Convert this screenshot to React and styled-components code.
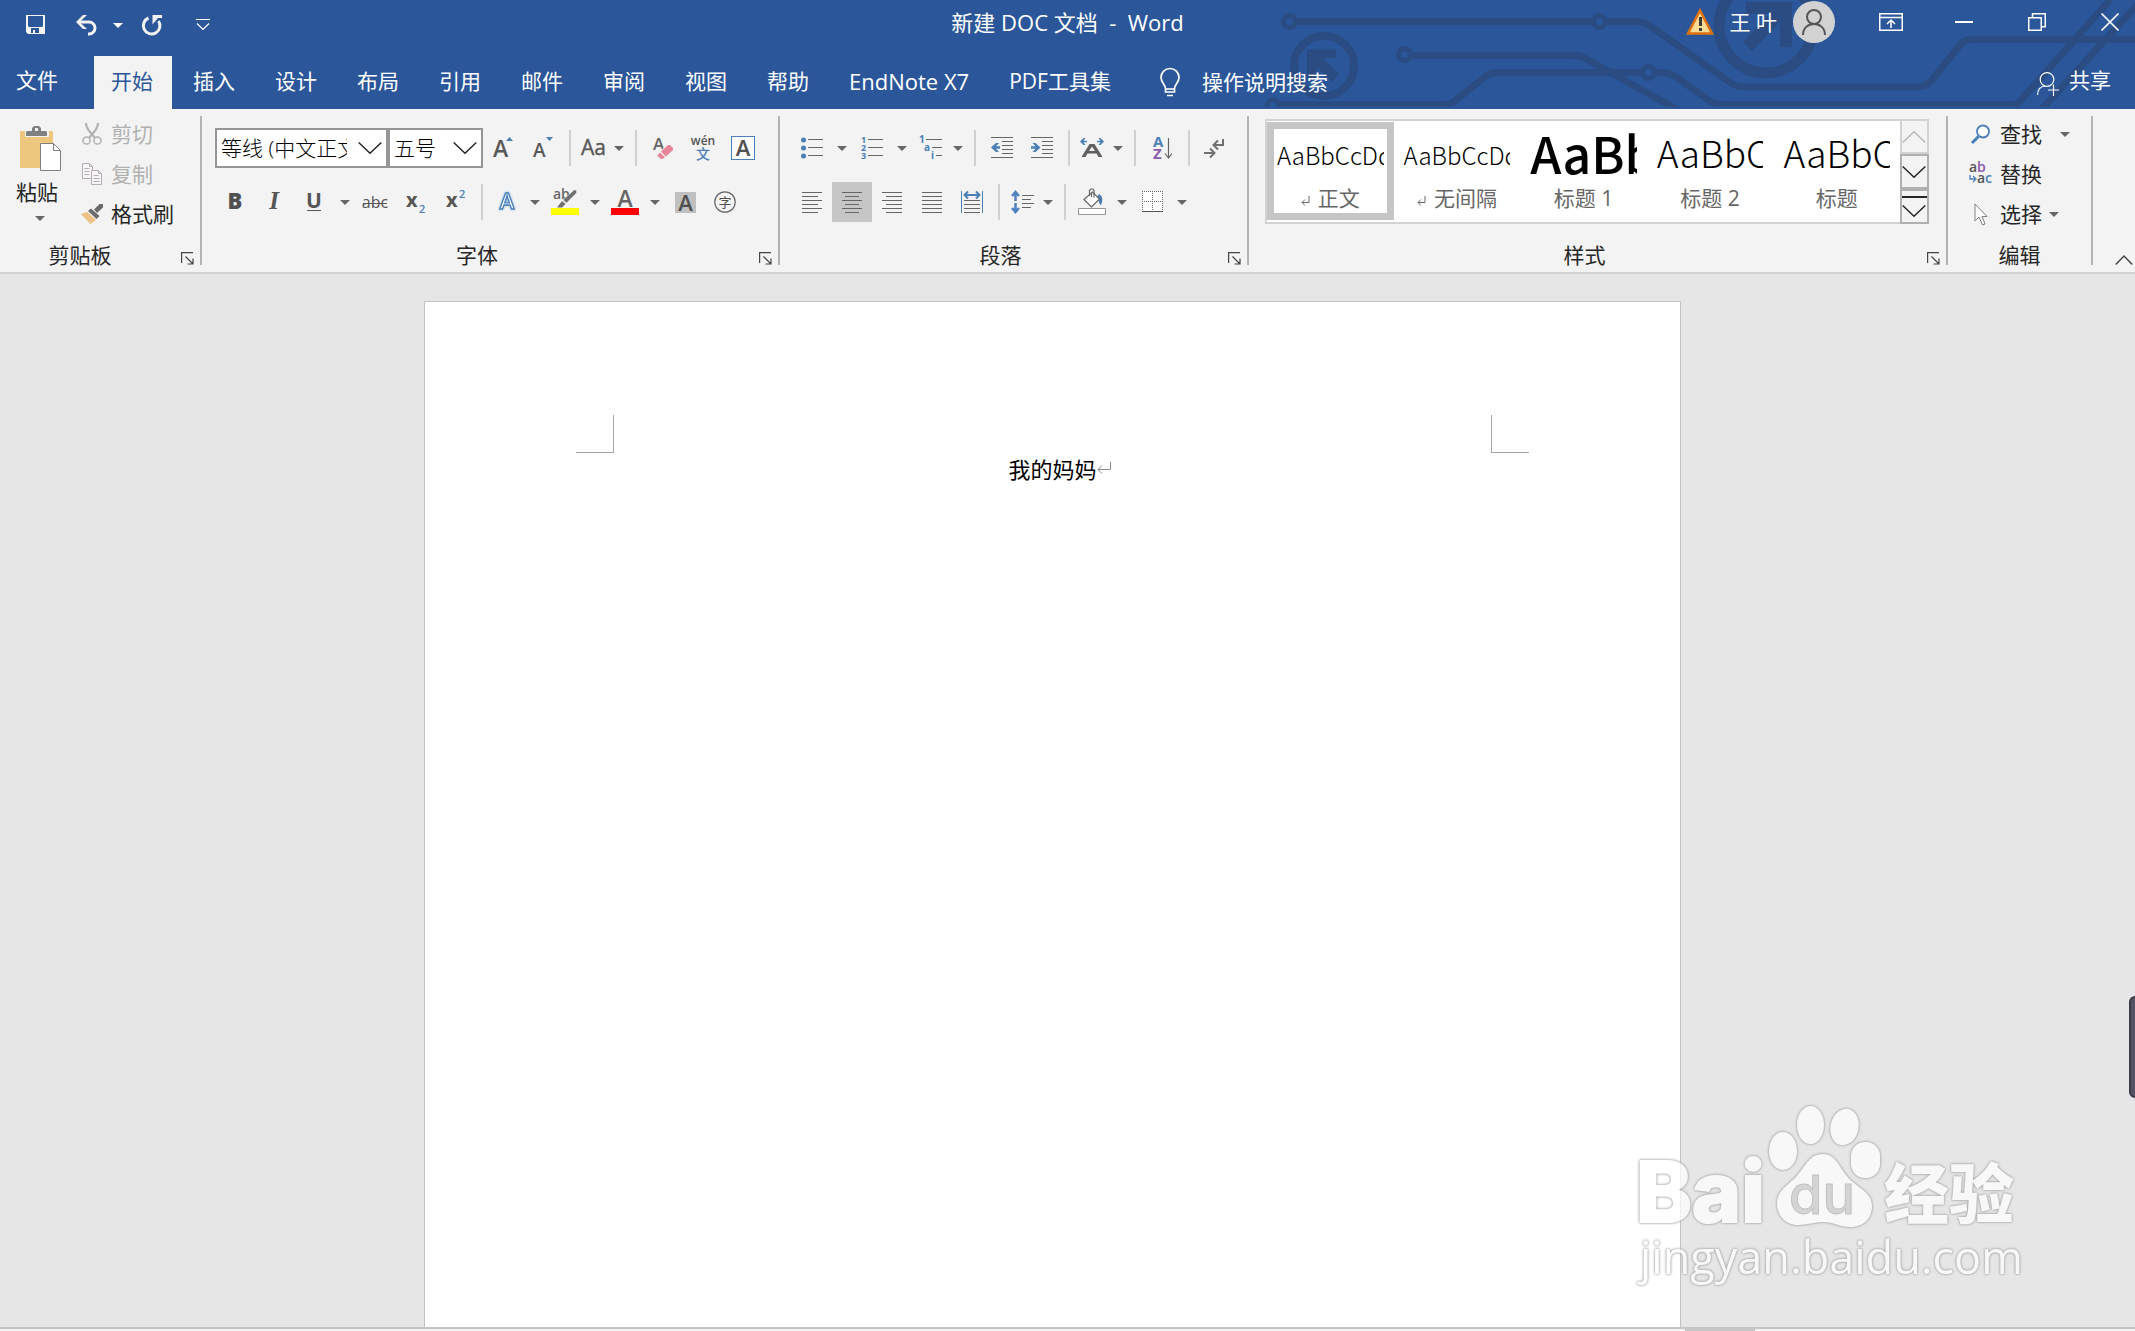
import styled, { createGlobalStyle, css } from 'styled-components';
import { useState } from 'react';

const GlobalStyle = createGlobalStyle`
  * {
    box-sizing: border-box;
  }

  body {
    margin: 0;
    font-family: 'Open Sans', 'Noto Sans CJK SC', sans-serif;
    font-size: 21px;
    line-height: 28px;
    color: #262626;
  }

  button, input, select {
    font: inherit;
    color: inherit;
    border: 0;
    padding: 0;
    background: none;
    outline: 0;
  }

  svg {
    display: block;
    flex: none;
    overflow: visible;
  }
`;

const Window = styled.div`
  min-height: 100vh;
  display: flex;
  flex-direction: column;
  position: relative;
  overflow: hidden;
  background: #e6e6e6;
`;

const Header = styled.header`
  position: relative;
  background: #2b579a;
  color: #fff;
`;

const Circuit = styled.svg`
  position: absolute;
  top: 0;
  right: 0;
  overflow: hidden;
  pointer-events: none;
`;

const TitleBar = styled.div`
  position: relative;
  height: 44px;
  display: grid;
  grid-template-columns: 1fr auto 1fr;
  align-items: center;
`;

const QuickAccess = styled.div`
  display: flex;
  align-items: center;
  gap: 10px;
  padding: 6px 0 0 16px;
`;

const SplitButton = styled.div`
  display: flex;
`;

const QuickButton = styled.button`
  width: ${({ $w }) => $w}px;
  height: 32px;
  display: flex;
  align-items: center;
  justify-content: center;
`;

const Title = styled.h1`
  margin: 0;
  font-size: 22px;
  font-weight: 400;
  white-space: pre;
`;

const WindowControls = styled.div`
  display: flex;
  align-items: center;
  justify-content: flex-end;
  gap: 23px;
  height: 44px;
`;

const Account = styled.div`
  display: flex;
  align-items: center;
  gap: 16px;
  padding-right: 8px;
  white-space: nowrap;
`;

const WindowButton = styled.button`
  width: 50px;
  height: 44px;
  display: flex;
  align-items: center;
  justify-content: center;
`;

const TabBar = styled.nav`
  position: relative;
  display: flex;
  align-items: stretch;
  height: 53px;
  margin-top: 12px;
  white-space: nowrap;
`;

const Tab = styled.button`
  padding: 0 19px 4px 17px;
  margin-right: 4px;

  ${({ $file }) =>
    $file &&
    css`
      margin-right: 17px;
      padding: 0 19px 6px 16px;
    `}

  ${({ $latin }) =>
    $latin &&
    css`
      font-size: 22px;
    `}

  ${({ $active }) =>
    $active &&
    css`
      background: #f3f3f3;
      color: #2b579a;
    `}
`;

const TellMe = styled.label`
  display: flex;
  align-items: center;
  gap: 22px;
  padding-left: 26px;

  input {
    width: 200px;
    padding-bottom: 2px;

    &::placeholder {
      color: #fff;
      opacity: 1;
    }
  }
`;

const Share = styled.button`
  display: flex;
  align-items: center;
  gap: 10px;
  margin-left: auto;
  padding: 0 24px 6px 0;

  svg {
    margin-top: 8px;
  }
`;

const RibbonBar = styled.section`
  display: flex;
  padding: 7px 0;
  background: #f3f3f3;
  border-bottom: 2px solid #d2d2d2;
`;

const Group = styled.div`
  width: ${({ $w }) => ($w ? `${$w}px` : 'auto')};
  flex: ${({ $w }) => ($w ? 'none' : '1 1 0')};
  min-width: 0;
  height: 149px;
  display: flex;
  flex-direction: column;
  justify-content: space-between;
  border-right: 2px solid #b3b3b3;
`;

const GroupFooter = styled.div`
  height: 20px;
  display: flex;
  align-items: center;

  span {
    flex: 1;
    padding-right: ${({ $pad }) => $pad || 0}px;
    text-align: center;
  }
`;

const Launcher = styled.button`
  width: 26px;
  display: flex;
  justify-content: center;
  padding-top: 6px;
`;

const ClipboardBody = styled.div`
  display: flex;
  gap: 18px;
  padding-left: 16px;
`;

const PasteButton = styled.button`
  display: flex;
  flex-direction: column;
  align-items: flex-start;
  padding-top: 10px;
  gap: 6px;

  span + svg {
    margin: 4px 0 0 19px;
  }
`;

const CommandList = styled.div`
  display: flex;
  flex-direction: column;
`;

const Command = styled.button`
  height: 40px;
  display: flex;
  align-items: center;
  gap: 7px;
  padding-bottom: 4px;
  text-align: left;
  white-space: nowrap;

  &:disabled {
    color: #b1b1b1;
  }

  > span:first-child {
    width: 24px;
    display: flex;
    justify-content: center;
  }
`;

const ToolRows = styled.div`
  display: flex;
  flex-direction: column;
  gap: 14px;
  padding: 12px 0 0 ${({ $left }) => $left}px;
`;

const ToolRow = styled.div`
  display: flex;
  align-items: center;
  height: 40px;
`;

const Tool = styled.button`
  width: ${({ $w }) => $w || 40}px;
  height: 40px;
  display: flex;
  align-items: center;
  justify-content: center;
  flex: none;
  background: ${({ $active }) => ($active ? '#c6c6c6' : 'none')};
`;

const Divider = styled.span`
  width: 2px;
  height: 36px;
  margin: 0 6px;
  flex: none;
  background: #d0d0d0;
`;

const Combo = styled.label`
  position: relative;
  width: ${({ $w }) => $w}px;

  select {
    appearance: none;
    width: 100%;
    height: 40px;
    display: block;
    padding: 0 39px 0 4px;
    border: 2px solid #969696;
    border-radius: 0;
    background: #fff;
    font-weight: 300;
    color: #000;
    text-overflow: clip;
  }

  svg {
    position: absolute;
    right: 6px;
    top: 14px;
    pointer-events: none;
  }
`;

const Gallery = styled.div`
  display: flex;
  height: 105px;
  margin: 3px 17px 0 16px;
  border: 2px solid #d2d2d2;
  border-right: 0;
  background: #fff;
`;

const StyleCard = styled.button`
  flex: 1 1 0;
  min-width: 0;
  height: 98px;
  margin-top: 1px;
  padding: 0 3px;
  border: 7px solid ${({ $active }) => ($active ? '#c5c5c5' : 'transparent')};
  display: flex;
  flex-direction: column;
`;

const Preview = styled.span`
  display: block;
  width: 100%;
  height: 55px;
  overflow: hidden;
  text-align: left;
  font-family: 'Noto Sans CJK SC', sans-serif;
  font-size: ${({ $size }) => $size}px;
  font-weight: ${({ $bold }) => ($bold ? 500 : 300)};
  line-height: ${({ $size }) => ($size > 30 ? 46 : 52)}px;
  color: #000;
`;

const StyleName = styled.span`
  width: 100%;
  display: flex;
  align-items: center;
  justify-content: center;
  gap: 8px;
  color: #666;
  white-space: nowrap;

  svg {
    margin-top: 5px;
  }
`;

const GalleryScroll = styled.div`
  width: 29px;
  margin: -2px 0;
  display: flex;
  flex-direction: column;
`;

const ScrollButton = styled.button`
  flex: 1;
  display: flex;
  flex-direction: column;
  align-items: center;
  justify-content: center;
  gap: 7px;
  border: 2px solid ${({ disabled }) => (disabled ? '#d2d2d2' : '#b0b0b0')};
  background: #f3f3f3;
  color: ${({ disabled }) => (disabled ? '#b8b8b8' : '#262626')};
`;

const EditBody = styled.div`
  padding-left: 21px;
`;

const CollapseButton = styled.button`
  flex: none;
  width: 42px;
  display: flex;
  align-items: flex-end;
  justify-content: flex-end;
  padding-right: 2px;
`;

const Workspace = styled.main`
  flex: 1;
  display: flex;
  justify-content: center;
  padding: 27px 30px 0 0;
`;

const Page = styled.article`
  width: 1257px;
  padding: 113px 151px 0;
  background: #fff;
  border: 1px solid #c3c3c3;
  border-bottom: 0;
`;

const Margins = styled.div`
  display: flex;
  justify-content: space-between;
`;

const Corner = styled.span`
  width: 38px;
  height: 38px;
  border-bottom: 1px solid #a6a6a6;
  border-${({ $side }) => $side}: 1px solid #a6a6a6;
`;

const Paragraph = styled.p`
  margin: 0;
  text-align: center;
  font-family: 'Noto Sans CJK SC', sans-serif;
  font-size: 22px;
  font-weight: 400;
  line-height: 30px;
  color: #000;

  span {
    position: relative;
  }

  svg {
    position: absolute;
    left: 100%;
    top: 10px;
  }
`;

const ScrollTrack = styled.div`
  height: 4px;
  display: flex;
  justify-content: flex-end;
  padding-right: 380px;
  background: #f3f3f3;
  border-top: 2px solid #c6c6c6;
`;

const ScrollThumb = styled.span`
  width: 70px;
  background: #c6c6c6;
`;

const SideHandle = styled.span`
  position: absolute;
  right: -6px;
  bottom: 233px;
  width: 12px;
  height: 102px;
  border: 2px solid #3c3c48;
  border-radius: 6px;
  background: #525464;
`;

const Watermark = styled.svg`
  position: absolute;
  right: 103px;
  bottom: 30px;
  opacity: 0.75;
  pointer-events: none;

  g {
    fill: #fff;
    filter: drop-shadow(0 0 1px #8c8c8c) drop-shadow(0 0 1px #b0b0b0);
  }
`;

const Caret = ({ color = '#666' }) => (
  <svg width="10" height="5" viewBox="0 0 10 5">
    <path d="M0 0h10L5 5z" fill={color} />
  </svg>
);

const Chevron = ({ up }) => (
  <svg width="24" height="12" viewBox="0 0 24 12">
    <path
      d={up ? 'M0.7 11.5 12 0.8 23.3 11.5' : 'M0.7 0.5 12 11.2 23.3 0.5'}
      fill="none"
      stroke="currentColor"
      strokeWidth="1.5"
    />
  </svg>
);

const SANS = "'Open Sans', sans-serif";
const GRAY = '#666';
const BLUE = '#4a7fb8';

const icons = {
  save: (
    <svg width="20" height="20" viewBox="0 0 20 20">
      <path
        fillRule="evenodd"
        fill="#f3f3f3"
        d="M0 0h19v19H2l-2-2zM2 1v10l1 1h13l1-1V1zM5 13v5h2v-3h2v3h4v-5z"
      />
    </svg>
  ),
  undo: (
    <svg width="22" height="21" viewBox="0 0 22 21">
      <path d="M3 7h10a6 6 0 0 1 0 12h-1" fill="none" stroke="#f3f3f3" strokeWidth="3" />
      <path d="M11 0 3.5 7l7.500 7H7L0 7l7-7z" fill="#f3f3f3" />
    </svg>
  ),
  redo: (
    <svg width="20" height="21" viewBox="0 0 20 21">
      <path d="M6.500 3A8.300 8.300 0 1 0 16.500 6" fill="none" stroke="#f3f3f3" strokeWidth="3" />
      <path d="M10.500 9.500V0H20v3h-4z" fill="#f3f3f3" />
    </svg>
  ),
  customize: (
    <svg width="14" height="12" viewBox="0 0 14 12">
      <path d="M0 0.5h14M1 4.500l6 6 6-6" fill="none" stroke="#fff" strokeWidth="1.200" />
    </svg>
  ),
  warning: (
    <svg width="28" height="28" viewBox="0 0 28 28">
      <path d="M14 2.500 26 25.500H2z" fill="#fbdc94" stroke="#e07010" strokeWidth="2.500" />
      <path d="M13 9h3v9h-3zM13 20h3v3h-3z" fill="#3b3b3b" />
    </svg>
  ),
  avatar: (
    <svg width="42" height="42" viewBox="0 0 42 42">
      <circle cx="21" cy="21" r="21" fill="#d2d2d2" />
      <g fill="none" stroke="#555" strokeWidth="2">
        <circle cx="21" cy="16" r="7" />
        <path d="M10 34c0-7 5-11 11-11s11 4 11 11" />
      </g>
    </svg>
  ),
  ribbonOptions: (
    <svg width="24" height="18" viewBox="0 0 24 18" fill="none" stroke="#fff" strokeWidth="1.500">
      <path d="M.75.75h22.500v16.500H.75zM1 4.500h22M12 15V7.500M8 11l4-4 4 4" />
    </svg>
  ),
  minimize: (
    <svg width="18" height="2" viewBox="0 0 18 2">
      <path d="M0 1h18" stroke="#fff" strokeWidth="2" />
    </svg>
  ),
  restore: (
    <svg width="18" height="18" viewBox="0 0 18 18" fill="none" stroke="#fff" strokeWidth="1.500">
      <path d="M.75 4.750h12.500v12.500H.75zM4.500 4V.75h12.750v13H14" />
    </svg>
  ),
  close: (
    <svg width="18" height="18" viewBox="0 0 18 18" stroke="#fff" strokeWidth="1.700">
      <path d="M.5.5l17 17M17.500.5l-17 17" />
    </svg>
  ),
  bulb: (
    <svg width="20" height="29" viewBox="0 0 20 29" fill="none" stroke="#fff" strokeWidth="1.700">
      <path d="M5.500 20.500c0-4-4.500-6-4.500-11a9 9 0 0 1 18 0c0 5-4.500 7-4.500 11V24h-9zM5.500 21h9M7 27.500h6" />
    </svg>
  ),
  share: (
    <svg width="22" height="24" viewBox="0 0 22 24" fill="none" stroke="#fff" strokeWidth="1.200">
      <circle cx="10" cy="7.500" r="6.800" />
      <path d="M.6 23c0-6 3-8.500 7.400-9M11 18h11M16.500 12.500V24" />
    </svg>
  ),
  paste: (
    <svg width="46" height="46" viewBox="-4 0 46 46">
      <rect y="5" width="33" height="37" rx="1" fill="#eec77f" />
      <path d="M5 4h24v7H5z" fill="#f3f3f3" />
      <path
        fillRule="evenodd"
        d="M6 10V6l1-1h5V2l2-2h5l2 2v3h5l1 1v4zM15 2h3v3h-3z"
        fill="#808080"
      />
      <path d="M20.500 17.500h13l7 7v20h-20z" fill="#fff" stroke="#808080" />
      <path d="M33.500 17.500v7h7" fill="none" stroke="#808080" />
    </svg>
  ),
  cut: (
    <svg width="20" height="22" viewBox="0 0 20 22" fill="none" stroke="#b1b1b1" strokeWidth="1.500">
      <path d="M4 0c0 5 3 8 9 15M16 0c0 5-3 8-9 15" strokeWidth="2.200" />
      <circle cx="4.500" cy="17.500" r="3.600" />
      <circle cx="15.500" cy="17.500" r="3.600" />
    </svg>
  ),
  copy: (
    <svg width="20" height="22" viewBox="0 0 20 22" fill="#f8f4f8" stroke="#b5adb5">
      <path d="M.5.5h7l3 3v12H.5zM7.500.5v3h3M2.500 5.500h5M2.500 8.500h5M2.500 11.500h5" />
      <path d="M9.500 7.500h7l3 3v11h-10zM16.500 7.500v3h3M11.500 12.500h5M11.500 15.500h6M11.500 18.500h6" />
    </svg>
  ),
  painter: (
    <svg width="22" height="20" viewBox="0 0 22 20">
      <path d="M0 10l6-2 9 8-5.500 4z" fill="#eec282" />
      <path d="M7 7l3-2.500L18.500 12l-3 3z" fill="#6a6a6a" />
      <path d="M13 5.500 18.500 0H22v3.500L16 9z" fill="#6a6a6a" />
    </svg>
  ),
  grow: (
    <svg width="20" height="22" viewBox="0 0 20 22">
      <text x="0" y="20" fontFamily={SANS} fontSize="23" fontWeight="600" fill="#595959">A</text>
      <path d="M13 4l3.500-4L20 4z" fill={BLUE} />
    </svg>
  ),
  shrink: (
    <svg width="20" height="22" viewBox="0 0 20 22">
      <text x="0" y="20" fontFamily={SANS} fontSize="19" fontWeight="600" fill="#595959">A</text>
      <path d="M13 0h7l-3.500 4z" fill={BLUE} />
    </svg>
  ),
  changeCase: (
    <svg width="28" height="22" viewBox="0 0 28 22">
      <text x="2" y="18" fontFamily={SANS} fontSize="21" fill="#595959" stroke="#595959" strokeWidth=".4">Aa</text>
    </svg>
  ),
  clear: (
    <svg width="20" height="22" viewBox="0 0 20 22">
      <text x="0" y="13" fontFamily={SANS} fontSize="17" fontWeight="600" fill={GRAY}>A</text>
      <path d="M5 16 14.500 7.500 20 12.500 9.500 22 4 18z" fill="#f3f3f3" />
      <path d="M8 14.500 15 8h2l3 3v2l-7 6.500zM7 15.500l5 4.500-2.500 2H8l-3.500-3v-1z" fill="#e78699" />
    </svg>
  ),
  phonetic: (
    <svg width="24" height="26" viewBox="0 0 24 26">
      <text x="12" y="10" textAnchor="middle" fontFamily={SANS} fontSize="12" fontWeight="600" fill="#555">wén</text>
      <text x="12" y="24" textAnchor="middle" fontFamily="'Noto Sans CJK SC', sans-serif" fontSize="14" fontWeight="500" fill={BLUE}>文</text>
    </svg>
  ),
  border: (
    <svg width="24" height="24" viewBox="0 0 24 24">
      <rect x=".5" y=".5" width="23" height="23" fill="#fff" stroke={BLUE} />
      <text x="12" y="20" textAnchor="middle" fontFamily={SANS} fontSize="22" fontWeight="600" fill="#505050">A</text>
    </svg>
  ),
  bold: (
    <svg width="20" height="22" viewBox="0 0 20 22">
      <text x="10" y="18" textAnchor="middle" fontFamily={SANS} fontSize="22" fontWeight="800" fill="#505050">B</text>
    </svg>
  ),
  italic: (
    <svg width="20" height="22" viewBox="0 0 20 22">
      <text x="9" y="18" textAnchor="middle" fontFamily="'Liberation Serif', serif" fontSize="25" fontStyle="italic" fontWeight="700" fill="#555">I</text>
    </svg>
  ),
  underline: (
    <svg width="20" height="22" viewBox="0 0 20 22">
      <text x="9" y="17" textAnchor="middle" fontFamily={SANS} fontSize="21" fontWeight="700" fill="#555">U</text>
      <path d="M2 19.500h14" stroke="#555" />
    </svg>
  ),
  strike: (
    <svg width="26" height="22" viewBox="0 0 26 22">
      <text x="13" y="17" textAnchor="middle" fontFamily={SANS} fontSize="16" fill="#555">abc</text>
      <path d="M1 12.500h24" stroke="#555" />
    </svg>
  ),
  sub: (
    <svg width="22" height="26" viewBox="0 0 22 26">
      <text x="2" y="18" fontFamily={SANS} fontSize="20" fontWeight="700" fill="#555">x</text>
      <text x="15" y="24" fontFamily={SANS} fontSize="11" fontWeight="600" fill={BLUE}>2</text>
    </svg>
  ),
  sup: (
    <svg width="22" height="26" viewBox="0 0 22 26">
      <text x="2" y="18" fontFamily={SANS} fontSize="20" fontWeight="700" fill="#555">x</text>
      <text x="15" y="9" fontFamily={SANS} fontSize="11" fontWeight="600" fill={BLUE}>2</text>
    </svg>
  ),
  effects: (
    <svg width="22" height="24" viewBox="0 0 22 24" filter="drop-shadow(0 0 1px #7fb2e8)">
      <text x="11" y="19" textAnchor="middle" fontFamily={SANS} fontSize="22" fontWeight="600" fill="#fff" stroke={BLUE} strokeWidth="1.300">A</text>
    </svg>
  ),
  highlight: (
    <svg width="28" height="28" viewBox="0 0 28 28">
      <text x="2" y="11" fontFamily={SANS} fontSize="14" fontWeight="600" fill={GRAY}>ab</text>
      <path d="M12 12 23 2h2.500v3L15.500 15z" fill="#707070" stroke="#f3f3f3" strokeWidth=".5" />
      <path d="M11 13l3.500 3L11 19.500H6z" fill="#707070" />
      <path d="M0 20h28v7H0z" fill="#ff0" />
    </svg>
  ),
  fontColor: (
    <svg width="28" height="28" viewBox="0 0 28 28">
      <text x="14" y="19" textAnchor="middle" fontFamily={SANS} fontSize="23" fontWeight="600" fill={GRAY}>A</text>
      <path d="M0 20h28v7H0z" fill="#f00" />
    </svg>
  ),
  shading: (
    <svg width="21" height="21" viewBox="0 0 21 21">
      <path d="M0 0h21v21H0z" fill="#c0c0c0" />
      <text x="10.500" y="18.500" textAnchor="middle" fontFamily={SANS} fontSize="22" fontWeight="600" fill="#505050">A</text>
    </svg>
  ),
  enclose: (
    <svg width="22" height="22" viewBox="0 0 22 22">
      <circle cx="11" cy="11" r="10.200" fill="none" stroke={GRAY} strokeWidth="1.200" />
      <text x="11" y="15.500" textAnchor="middle" fontFamily="'Noto Sans CJK SC', sans-serif" fontSize="13" fill="#505050">字</text>
    </svg>
  ),
  bullets: (
    <svg width="22" height="22" viewBox="0 0 22 22">
      <g fill={BLUE}>
        <circle cx="2.500" cy="3" r="2.500" />
        <circle cx="2.500" cy="11" r="2.500" />
        <circle cx="2.500" cy="19" r="2.500" />
      </g>
      <path d="M7 2.500h15M7 10.500h15M7 18.500h15" stroke={GRAY} />
    </svg>
  ),
  numbering: (
    <svg width="22" height="24" viewBox="0 0 22 24">
      <g fontFamily={SANS} fontSize="9" fontWeight="700" fill={BLUE}>
        <text x="0" y="7">1</text>
        <text x="0" y="15">2</text>
        <text x="0" y="23">3</text>
      </g>
      <path d="M7 3.500h15M7 11.500h15M7 19.500h15" stroke={GRAY} />
    </svg>
  ),
  multilevel: (
    <svg width="24" height="24" viewBox="0 0 24 24">
      <g fontFamily={SANS} fontSize="10" fontWeight="700" fill={BLUE}>
        <text x="1" y="7">1</text>
        <text x="6" y="15">a</text>
        <text x="13" y="23">i</text>
      </g>
      <path d="M8 3.500h16M14 11.500h10M18 19.500h6" stroke={GRAY} />
    </svg>
  ),
  outdent: (
    <svg width="22" height="22" viewBox="0 0 22 22">
      <path d="M0 .5h22M11 4.500h11M11 8.500h11M11 12.500h11M11 16.500h11M0 20.500h22" stroke={GRAY} />
      <path d="M0 10.500 5 6h3L5 9.300h4v2.400H5L8 15H5z" fill={BLUE} />
    </svg>
  ),
  indent: (
    <svg width="22" height="22" viewBox="0 0 22 22">
      <path d="M0 .5h22M11 4.500h11M11 8.500h11M11 12.500h11M11 16.500h11M0 20.500h22" stroke={GRAY} />
      <path d="M9.500 10.500 4.500 6h-3l3 3.300H0v2.400h4.500l-3 3.300h3z" fill={BLUE} />
    </svg>
  ),
  asian: (
    <svg width="24" height="20" viewBox="0 0 24 20">
      <path d="M1.500 19 9.500 6h5l8 13h-4l-2-3.500h-9l-2 3.500zM12 8.500 9 13h6z" fill="#5f5f5f" fillRule="evenodd" />
      <path d="M0 3.500 3.500 0h2L3.500 2.700H7v1.600H3.500L5.500 7h-2zM24 3.500 20.500 0h-2l2 2.700H17v1.600h3.500L18.500 7h2z" fill={BLUE} />
    </svg>
  ),
  sort: (
    <svg width="20" height="24" viewBox="0 0 20 24">
      <text x="1" y="11" fontFamily={SANS} fontSize="15" fontWeight="700" fill={BLUE}>A</text>
      <text x="1" y="23" fontFamily={SANS} fontSize="15" fontWeight="700" fill="#8c57ad">Z</text>
      <path d="M16.500 2v20M13 17.500l3.500 4.500 3.500-4.500" fill="none" stroke={GRAY} strokeWidth="1.200" />
    </svg>
  ),
  marks: (
    <svg width="20" height="20" viewBox="0 0 20 20" fill="none" stroke="#707070" strokeWidth="2">
      <path d="M19 1v6h-9M14 2.500 9.500 7l4.500 4.500M0 15h10M6 10.500l4.500 4.500L6 19.500" />
    </svg>
  ),
  alignLeft: (
    <svg width="20" height="21" viewBox="0 0 20 21">
      <path d="M0 .5h20M0 4.500h16M0 8.500h20M0 12.500h16M0 16.500h20M0 20.500h16" stroke={GRAY} />
    </svg>
  ),
  alignCenter: (
    <svg width="20" height="21" viewBox="0 0 20 21">
      <path d="M0 .5h20M3 4.500h14M0 8.500h20M3 12.500h14M0 16.500h20M3 20.500h14" stroke={GRAY} />
    </svg>
  ),
  alignRight: (
    <svg width="20" height="21" viewBox="0 0 20 21">
      <path d="M0 .5h20M4 4.500h16M0 8.500h20M4 12.500h16M0 16.500h20M4 20.500h16" stroke={GRAY} />
    </svg>
  ),
  justify: (
    <svg width="20" height="21" viewBox="0 0 20 21">
      <path d="M0 .5h20M0 4.500h20M0 8.500h20M0 12.500h20M0 16.500h20M0 20.500h20" stroke={GRAY} />
    </svg>
  ),
  distribute: (
    <svg width="22" height="22" viewBox="0 0 22 22">
      <path d="M.5 0v22M21.500 0v22" stroke={BLUE} />
      <path d="M3 9.500h16M3 13.500h16M3 17.500h16M3 21.500h16" stroke={GRAY} />
      <path d="M3.500 4h15M7 .5 3.500 4 7 7.500M15 .5 18.500 4 15 7.500" fill="none" stroke={BLUE} strokeWidth="2" />
    </svg>
  ),
  spacing: (
    <svg width="22" height="24" viewBox="0 0 22 24">
      <path d="M4.500 2v9M1 6l3.500-4L8 6M4.500 13v9M1 18l3.500 4L8 18" fill="none" stroke="#5080c0" strokeWidth="2.500" />
      <path d="M11 5.500h12M11 9.500h9M11 13.500h12M11 17.500h9" stroke={GRAY} />
    </svg>
  ),
  bucket: (
    <svg width="28" height="28" viewBox="0 0 28 28">
      <path d="M21 6c4 2 4 7 2 11-2 0-2-5-4-8z" fill={BLUE} />
      <path d="M6 11.500 14.500 4l7 7-8 8z" fill="#fff" stroke={GRAY} strokeWidth="1.200" />
      <path d="M11.500 8V2.500L13 1h2l1 1.500v7M13.500 5v4" fill="none" stroke={GRAY} strokeWidth="1.200" />
      <path d="M.5 20.500h27v6H.5z" fill="#fff" stroke="#969696" />
    </svg>
  ),
  borders: (
    <svg width="21" height="22" viewBox="0 0 21 22">
      <path d="M0 0h21v21H0z" fill="#fff" />
      <path d="M0 .5h21M.5 0v21M20.500 0v21M10.500 0v21M0 10.500h21" stroke={GRAY} strokeDasharray="1 1" />
      <path d="M0 20.500h21" stroke="#555" />
    </svg>
  ),
  find: (
    <svg width="20" height="20" viewBox="0 0 20 20">
      <path d="M1 19l6.500-6.500" stroke={BLUE} strokeWidth="3" />
      <circle cx="12" cy="7.500" r="6" fill="#fff" stroke={BLUE} strokeWidth="1.800" />
    </svg>
  ),
  replace: (
    <svg width="24" height="24" viewBox="0 0 24 24">
      <g fontFamily={SANS} fontSize="14" fontWeight="600" fill="#555">
        <text x="0" y="10">a</text>
        <text x="8" y="10" fill="#8c57ad">b</text>
        <text x="8" y="21">a</text>
        <text x="16" y="21" fill={BLUE}>c</text>
      </g>
      <path d="M1 13v4h5M4 14l3 3-3 3" fill="none" stroke={BLUE} strokeWidth="1.300" />
    </svg>
  ),
  select: (
    <svg width="14" height="23" viewBox="0 0 14 23">
      <path d="M1 1v17l4-4 3.500 8L11 21 8 13.500h5z" fill="#fff" stroke="#808080" />
    </svg>
  ),
  launcher: (
    <svg width="13" height="13" viewBox="0 0 13 13" fill="none" stroke="#444" strokeWidth="1.200">
      <path d="M.6 11V.6H12M4.500 4.500l7 7M12 6.500V12H6.500" />
    </svg>
  ),
};

const tabs = ['开始', '插入', '设计', '布局', '引用', '邮件', '审阅', '视图', '帮助', 'EndNote X7', 'PDF工具集'];

// '|' 為分隔線，'v' 為下拉箭頭
const fontTop = ['grow', 'shrink', '|', ['changeCase', 32], 'v', '|', 'clear', 'phonetic', 'border'];
const fontBottom = [
  'bold', 'italic', 'underline', 'v', 'strike', 'sub', 'sup', '|',
  ['effects', 36], 'v', 'highlight', 'v', 'fontColor', 'v', 'shading', 'enclose',
];
const paragraphTop = [
  'bullets', 'v', 'numbering', 'v', ['multilevel', 36], 'v', '|', 'outdent', 'indent', '|',
  ['asian', 32], 'v', '|', 'sort', '|', ['marks', 36],
];
const paragraphBottom = [
  'alignLeft', 'alignCenter', 'alignRight', 'justify', 'distribute', '|',
  ['spacing', 32], 'v', '|', 'bucket', 'v', 'borders', 'v',
];

const styleCards = [
  { name: '正文', sample: 'AaBbCcDdEe', size: 24, mark: true },
  { name: '无间隔', sample: 'AaBbCcDdEe', size: 24, mark: true },
  { name: '标题 1', sample: 'AaBbCc', size: 50, bold: true },
  { name: '标题 2', sample: 'AaBbCc', size: 37 },
  { name: '标题', sample: 'AaBbCc', size: 37 },
];

const Tools = ({ items, active, onSelect }) =>
  items.map((item, i) => {
    if (item === '|') return <Divider key={i} />;
    if (item === 'v') {
      return (
        <Tool key={i} $w={20} aria-label="more">
          <Caret />
        </Tool>
      );
    }
    const [name, width] = [].concat(item);
    return (
      <Tool
        key={i}
        $w={width}
        $active={name === active}
        aria-label={name}
        onClick={() => onSelect?.(name)}
      >
        {icons[name]}
      </Tool>
    );
  });

const Footer = ({ label, launcher = true, pad }) => (
  <GroupFooter $pad={pad}>
    <span>{label}</span>
    {launcher && <Launcher aria-label={label}>{icons.launcher}</Launcher>}
  </GroupFooter>
);

const ReturnMark = () => (
  <svg width="14" height="13" viewBox="0 0 14 13" fill="none" stroke="#8a8a8a">
    <path d="M13.500 0v7.500H1M5 3.500l-4 4 4 4" />
  </svg>
);

const CircuitPattern = () => (
  <Circuit width="875" height="107" viewBox="1260 0 875 107" fill="none" stroke="#2a4c82">
    <g strokeWidth="7">
      <path d="M1297 21.500H1593M1607 21.500H1636Q1643 21.500 1650 26L1728 81Q1736 87 1744 87H1918Q1926 87 1931 81L1960 45Q1965 39.500 1971 39.500H2135" />
      <path d="M1411 55.500H1574Q1581 55.500 1588 60L1680 111" />
      <path d="M1280 104.500H1445Q1451 104.500 1456 100L1486 76Q1491 72.500 1498 72.500H1641M1656 72.500H1662Q1669 72.500 1676 77L1710 101Q1715 104.500 1721 104.500H2017L2110 0" />
      <path d="M2041 110 2138 4" />
    </g>
    <g strokeWidth="5">
      <circle cx="1289.500" cy="21.500" r="6" />
      <circle cx="1599.500" cy="21.500" r="6" />
      <circle cx="1404.500" cy="54.500" r="6" />
      <circle cx="1648.500" cy="72.500" r="6" />
      <circle cx="1273" cy="106" r="6" />
    </g>
    <circle cx="1324" cy="66" r="30" strokeWidth="8" />
    <circle cx="1766" cy="26" r="47" strokeWidth="11" />
    <g fill="#2a4c82" stroke="none">
      <path d="M1307 49.500H1336V58H1323L1339 74 1332 82 1317 67V80H1307z" />
      <path d="M1746 2H1792V47H1780V22L1752 51 1743 42 1770 14H1746z" />
    </g>
  </Circuit>
);

const BaiduMark = () => (
  <Watermark width="400" height="200" viewBox="1632 1100 400 200" aria-label="Baidu">
    <g>
      <text x="1636" y="1221" fontFamily="Inter, sans-serif" fontSize="84" fontWeight="800" stroke="#fff" strokeWidth="2">Bai</text>
      <ellipse cx="1783" cy="1150" rx="14" ry="19" />
      <ellipse cx="1810.500" cy="1124" rx="13.500" ry="19" />
      <ellipse cx="1844.500" cy="1126" rx="14" ry="18.500" transform="rotate(12 1844.500 1126)" />
      <rect x="1851" y="1141" width="29" height="36" rx="14" />
      <path d="M1823.500 1153C1835 1153 1839 1165 1846 1174C1855 1186 1872 1190 1872 1205C1872 1218 1863 1226 1850 1226C1840 1226 1833 1221 1823 1221C1814 1221 1808 1224 1798 1224C1785 1224 1777 1214 1777 1202C1777 1190 1788 1184 1796 1176C1806 1165 1809 1153 1823.500 1153Z" />
      <text x="1884" y="1217" fontFamily="'Noto Sans CJK SC', sans-serif" fontSize="65" fontWeight="900">经验</text>
      <text x="1640" y="1273" fontFamily={SANS} fontSize="45">jingyan.baidu.com</text>
    </g>
    <text x="1822" y="1213" textAnchor="middle" fontFamily="Inter, sans-serif" fontSize="54" fontWeight="500" fill="#cfcfcf" stroke="#b5b5b5">du</text>
  </Watermark>
);

const App = () => {
  const [tab, setTab] = useState('开始');
  const [align, setAlign] = useState('alignCenter');
  const [style, setStyle] = useState('正文');

  return (
    <Window>
      <GlobalStyle />
      <Header>
        <CircuitPattern />
        <TitleBar>
          <QuickAccess>
            <QuickButton $w={40} aria-label="save">{icons.save}</QuickButton>
            <SplitButton>
              <QuickButton $w={42} aria-label="undo">{icons.undo}</QuickButton>
              <QuickButton $w={20} aria-label="undo history"><Caret color="#fff" /></QuickButton>
            </SplitButton>
            <QuickButton $w={28} aria-label="redo">{icons.redo}</QuickButton>
            <QuickButton $w={54} aria-label="customize">{icons.customize}</QuickButton>
          </QuickAccess>
          <Title>{'新建 DOC 文档  -  Word'}</Title>
          <WindowControls>
            <Account>
              {icons.warning}
              <span>王 叶</span>
              {icons.avatar}
            </Account>
            <WindowButton aria-label="ribbon options">{icons.ribbonOptions}</WindowButton>
            <WindowButton aria-label="minimize">{icons.minimize}</WindowButton>
            <WindowButton aria-label="restore">{icons.restore}</WindowButton>
            <WindowButton aria-label="close">{icons.close}</WindowButton>
          </WindowControls>
        </TitleBar>
        <TabBar>
          <Tab $file>文件</Tab>
          {tabs.map((name) => (
            <Tab
              key={name}
              $active={name === tab}
              $latin={/^[\w ]+$/.test(name)}
              onClick={() => setTab(name)}
            >
              {name}
            </Tab>
          ))}
          <TellMe>
            {icons.bulb}
            <input type="text" placeholder="操作说明搜索" />
          </TellMe>
          <Share>
            {icons.share}
            共享
          </Share>
        </TabBar>
      </Header>

      <RibbonBar>
        <Group $w={202}>
          <ClipboardBody>
            <PasteButton>
              {icons.paste}
              <span>粘贴</span>
              <Caret />
            </PasteButton>
            <CommandList>
              <Command disabled><span>{icons.cut}</span>剪切</Command>
              <Command disabled><span>{icons.copy}</span>复制</Command>
              <Command><span>{icons.painter}</span>格式刷</Command>
            </CommandList>
          </ClipboardBody>
          <Footer label="剪贴板" pad={14} />
        </Group>

        <Group $w={578}>
          <ToolRows $left={13}>
            <ToolRow>
              <Combo $w={173}>
                <select aria-label="字体"><option>等线 (中文正文)</option></select>
                <Chevron />
              </Combo>
              <Combo $w={95}>
                <select aria-label="字号"><option>五号</option></select>
                <Chevron />
              </Combo>
              <Tools items={fontTop} />
            </ToolRow>
            <ToolRow>
              <Tools items={fontBottom} />
            </ToolRow>
          </ToolRows>
          <Footer label="字体" />
        </Group>

        <Group $w={469}>
          <ToolRows $left={12}>
            <ToolRow>
              <Tools items={paragraphTop} />
            </ToolRow>
            <ToolRow>
              <Tools items={paragraphBottom} active={align} onSelect={setAlign} />
            </ToolRow>
          </ToolRows>
          <Footer label="段落" />
        </Group>

        <Group>
          <Gallery>
            {styleCards.map((card) => (
              <StyleCard
                key={card.name}
                $active={card.name === style}
                onClick={() => setStyle(card.name)}
              >
                <Preview $size={card.size} $bold={card.bold}>{card.sample}</Preview>
                <StyleName>
                  {card.mark && (
                    <svg width="9" height="10" viewBox="0 0 9 10" fill="none" stroke="#666">
                      <path d="M8 0v6.500H1M4 3.500l-3 3 3 3" />
                    </svg>
                  )}
                  {card.name}
                </StyleName>
              </StyleCard>
            ))}
            <GalleryScroll>
              <ScrollButton disabled aria-label="up"><Chevron up /></ScrollButton>
              <ScrollButton aria-label="down"><Chevron /></ScrollButton>
              <ScrollButton aria-label="all styles">
                <svg width="25" height="2" viewBox="0 0 25 2">
                  <path d="M0 1h25" stroke="currentColor" strokeWidth="2" />
                </svg>
                <Chevron />
              </ScrollButton>
            </GalleryScroll>
          </Gallery>
          <Footer label="样式" />
        </Group>

        <Group $w={145}>
          <EditBody>
            <Command><span>{icons.find}</span>查找<Tool as="span" $w={32}><Caret /></Tool></Command>
            <Command><span>{icons.replace}</span>替换</Command>
            <Command><span>{icons.select}</span>选择<Caret /></Command>
          </EditBody>
          <Footer label="编辑" launcher={false} />
        </Group>

        <CollapseButton aria-label="collapse">
          <svg width="18" height="10" viewBox="0 0 18 10">
            <path d="M.7 9.500 9 1l8.300 8.500" fill="none" stroke="#444" strokeWidth="1.500" />
          </svg>
        </CollapseButton>
      </RibbonBar>

      <Workspace>
        <Page>
          <Margins>
            <Corner $side="right" />
            <Corner $side="left" />
          </Margins>
          <Paragraph>
            <span>
              我的妈妈
              <ReturnMark />
            </span>
          </Paragraph>
        </Page>
      </Workspace>
      <ScrollTrack>
        <ScrollThumb />
      </ScrollTrack>
      <SideHandle />
      <BaiduMark />
    </Window>
  );
};

export default App;
